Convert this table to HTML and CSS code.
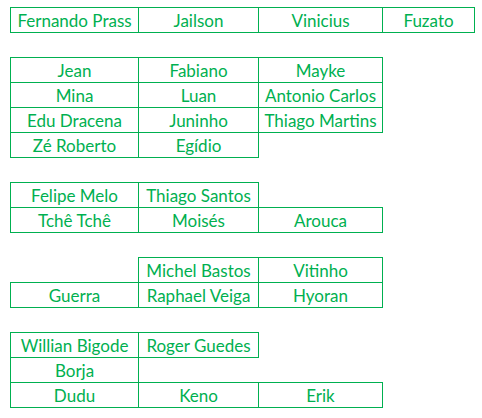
FILE: index.html
```html
<!DOCTYPE html>
<html>
<head>
<meta charset="utf-8">
<link rel="stylesheet" href="styles.css">
</head>
<body>
<table class="sheet">
  <colgroup>
    <col class="c1"><col class="c2"><col class="c3"><col class="c4">
  </colgroup>
  <tr><td class="b">Fernando Prass</td><td class="b">Jailson</td><td class="b">Vinicius</td><td class="b">Fuzato</td></tr>
  <tr><td></td><td></td><td></td><td></td></tr>
  <tr><td class="b">Jean</td><td class="b">Fabiano</td><td class="b">Mayke</td><td></td></tr>
  <tr><td class="b">Mina</td><td class="b">Luan</td><td class="b">Antonio Carlos</td><td></td></tr>
  <tr><td class="b">Edu Dracena</td><td class="b">Juninho</td><td class="b">Thiago Martins</td><td></td></tr>
  <tr><td class="b">Zé Roberto</td><td class="b">Egídio</td><td></td><td></td></tr>
  <tr><td></td><td></td><td></td><td></td></tr>
  <tr><td class="b">Felipe Melo</td><td class="b">Thiago Santos</td><td></td><td></td></tr>
  <tr><td class="b">Tchê Tchê</td><td class="b">Moisés</td><td class="b">Arouca</td><td></td></tr>
  <tr><td></td><td></td><td></td><td></td></tr>
  <tr><td></td><td class="b">Michel Bastos</td><td class="b">Vitinho</td><td></td></tr>
  <tr><td class="b">Guerra</td><td class="b">Raphael Veiga</td><td class="b">Hyoran</td><td></td></tr>
  <tr><td></td><td></td><td></td><td></td></tr>
  <tr><td class="b">Willian Bigode</td><td class="b">Roger Guedes</td><td></td><td></td></tr>
  <tr><td class="b">Borja</td><td></td><td></td><td></td></tr>
  <tr><td class="b">Dudu</td><td class="b">Keno</td><td class="b">Erik</td><td></td></tr>
</table>
</body>
</html>
```
FILE: styles.css
```css
html, body {
  margin: 0;
  padding: 0;
  background: #ffffff;
}
body {
  padding: 7px 0 0 10px;
  font-family: "Lato", "Liberation Sans", sans-serif;
  font-size: 17px;
  color: #00b050;
}
.sheet {
  border-collapse: collapse;
  table-layout: fixed;
  width: 464px;
}
.c1 { width: 128px; }
.c2 { width: 120px; }
.c3 { width: 124px; }
.c4 { width: 92px; }
.sheet td {
  height: 25px;
  padding: 0 0 2px 0;
  box-sizing: border-box;
  text-align: center;
  vertical-align: bottom;
  white-space: nowrap;
  overflow: hidden;
  line-height: 18px;
}
.sheet td.b {
  border: 1px solid #00b050;
}
```
